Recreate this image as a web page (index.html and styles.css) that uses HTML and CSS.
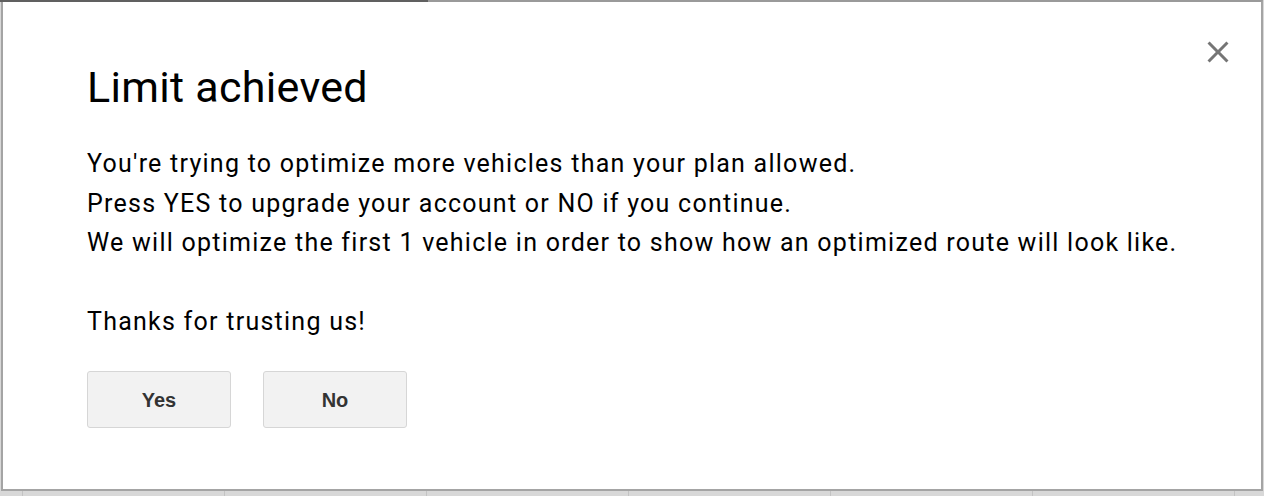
FILE: index.html
```html
<!DOCTYPE html>
<html lang="en">
<head>
<meta charset="utf-8">
<title>Limit achieved</title>
<link rel="stylesheet" href="styles.css">
</head>
<body>
<div class="sheet">
  <div class="dialog" role="dialog" aria-labelledby="dlg-title">
    <button class="close" aria-label="Close">
      <svg viewBox="0 0 24 24" width="36" height="36" aria-hidden="true">
        <path d="M19 6.41L17.59 5 12 10.59 6.41 5 5 6.41 10.59 12 5 17.59 6.41 19 12 13.41 17.59 19 19 17.59 13.41 12z"/>
      </svg>
    </button>
    <h1 class="title" id="dlg-title">Limit achieved</h1>
    <p class="msg">You're trying to optimize more vehicles than your plan allowed.<br>Press YES to upgrade your account or NO if you continue.<br>We will optimize the first 1 vehicle in order to show how an optimized route will look like.</p>
    <p class="msg thanks">Thanks for trusting us!</p>
    <div class="actions">
      <button class="btn">Yes</button>
      <button class="btn">No</button>
    </div>
  </div>
</div>
</body>
</html>
```

FILE: styles.css
```css
html, body {
  margin: 0;
  padding: 0;
}

body {
  width: 1264px;
  height: 496px;
  overflow: hidden;
  background-color: #d8d8d8;
  background-image: repeating-linear-gradient(to right, transparent 0 22px, #c3c3c3 22px 23px, transparent 23px 202px);
}

.sheet {
  padding-left: 1px;
}

.dialog {
  position: relative;
  box-sizing: border-box;
  width: 1262px;
  height: 491px;
  background: #fff;
  border: 2px solid #a4a4a4;
  border-top-color: #9a9a9a;
  padding: 0 0 0 84px;
  font-family: Roboto, "Liberation Sans", sans-serif;
  color: #000;
}

.dialog::before {
  content: "";
  position: absolute;
  left: -3px;
  top: -2px;
  width: 428px;
  height: 2px;
  background: #606060;
}

.close {
  position: absolute;
  top: 32px;
  right: 25px;
  width: 36px;
  height: 36px;
  padding: 0;
  border: 0;
  background: transparent;
  cursor: pointer;
}

.close svg {
  display: block;
  fill: #757575;
}

.title {
  margin: 64px 0 0;
  font-size: 43px;
  line-height: 43px;
  font-weight: 400;
  letter-spacing: 0.3px;
}

.msg {
  margin: 35px 0 0;
  font-size: 25px;
  line-height: 39.5px;
  letter-spacing: 1.25px;
}

.thanks {
  margin-top: 39px;
}

.actions {
  display: flex;
  gap: 32px;
  margin-top: 30px;
}

.btn {
  box-sizing: border-box;
  width: 144px;
  height: 57px;
  padding: 2px 0 0;
  background: #f2f2f2;
  border: 1px solid #d6d6d6;
  border-radius: 3px;
  font-family: "Liberation Sans", Arial, sans-serif;
  font-size: 20px;
  font-weight: 700;
  color: #333;
  cursor: pointer;
}
```
